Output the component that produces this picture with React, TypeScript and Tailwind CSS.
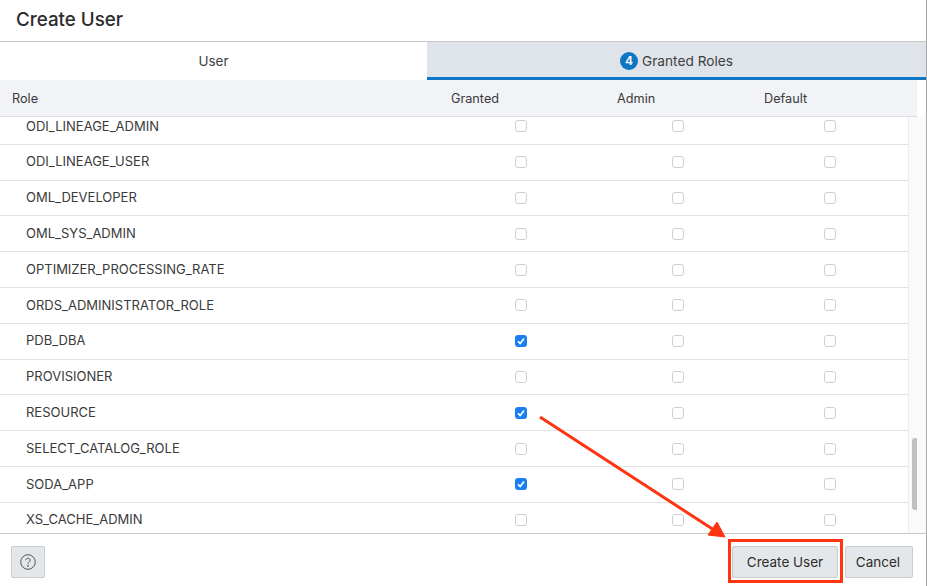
const font = "font-['Inter','Liberation_Sans',sans-serif]";

const roles: { name: string; granted?: boolean }[] = [
  { name: "ODI_LINEAGE_ADMIN" },
  { name: "ODI_LINEAGE_USER" },
  { name: "OML_DEVELOPER" },
  { name: "OML_SYS_ADMIN" },
  { name: "OPTIMIZER_PROCESSING_RATE" },
  { name: "ORDS_ADMINISTRATOR_ROLE" },
  { name: "PDB_DBA", granted: true },
  { name: "PROVISIONER" },
  { name: "RESOURCE", granted: true },
  { name: "SELECT_CATALOG_ROLE" },
  { name: "SODA_APP", granted: true },
  { name: "XS_CACHE_ADMIN" },
];

function Checkbox({ checked }: { checked?: boolean }) {
  if (checked) {
    return (
      <span className="flex h-3 w-3 items-center justify-center rounded-[3px] bg-[#1a7ff5]">
        <svg viewBox="0 0 12 12" className="h-3 w-3" fill="none">
          <path d="M3 6.3 L5.2 8.5 L9 3.6" stroke="white" strokeWidth="1.7" />
        </svg>
      </span>
    );
  }
  return <span className="block h-3 w-3 rounded-[3px] border border-[#cfcfcf] bg-white" />;
}

function RoleRow({ name, granted }: { name: string; granted?: boolean }) {
  return (
    <div className="grid h-[35.8px] grid-cols-[515px_157px_152px_84px] items-center border-b border-[#e2e2e2] text-[13px] text-[#3a3a3a]">
      <div className="pl-[26px]">{name}</div>
      <Checkbox checked={granted} />
      <Checkbox />
      <Checkbox />
    </div>
  );
}

export default function App() {
  return (
    <div className={`relative flex h-[586px] w-[927px] flex-col overflow-hidden border-r border-[#a8a8a8] bg-white ${font}`}>
      <div className="flex h-[41px] items-center pb-[1px] pl-4 text-[18.8px] font-medium text-[#2c2c2c]">Create User</div>

      <div className="flex h-[39px] border-t border-[#c9c9c9] text-[13.5px] text-[#3f3f3f]">
        <div className="flex w-[427px] items-center justify-center">User</div>
        <div className="flex flex-1 items-center justify-center gap-[4px] border-b-[3px] border-[#0f76c6] bg-[#dfe3ea] pt-[3px]">
          <span className="flex h-[18px] w-[18px] items-center justify-center rounded-full bg-[#0f76c6] text-[12px] font-semibold text-white">4</span>
          <span className="text-[13.7px]">Granted Roles</span>
        </div>
      </div>

      <div className="flex h-[37px] w-[917px] items-center border-b border-[#d8dce3] bg-[#f1f3f6] pl-3 pt-[2px] text-[12.7px] text-[#3a3a3a]">
        <span className="w-[439px]">Role</span>
        <span className="w-[166px]">Granted</span>
        <span className="w-[147px]">Admin</span>
        <span>Default</span>
      </div>

      <div className="flex min-h-0 flex-1">
        <div className="w-[908px] overflow-hidden">
          <div className="mt-[-8px]">
            {roles.map((r) => (
              <RoleRow key={r.name} name={r.name} granted={r.granted} />
            ))}
          </div>
        </div>
        <div className="flex-1 border-l border-[#efefef] bg-[#fafafa] pl-[3px] pt-[321px]">
          <div className="h-[72px] w-[5px] rounded-l-[3px] bg-[#c1c1c1]" />
        </div>
      </div>

      <div className="flex h-[53px] items-center justify-between border-t border-[#c9c9c9] pl-[11px] pr-[13px] pt-[4px] text-[13.5px] text-[#2c2c2c]">
        <button className="flex h-[32px] w-[34px] items-center justify-center rounded-[2px] border border-[#c9ccd0] bg-[#e4e7ea] text-[#444]">
          <svg viewBox="0 0 16 16" className="h-4 w-4" fill="none" stroke="currentColor" strokeWidth="0.9">
            <circle cx="8" cy="8" r="7.3" />
            <path d="M5.8 6.2 C5.8 3.6 10.2 3.6 10.2 6.2 C10.2 7.9 8 7.8 8 9.8" />
            <circle cx="8" cy="11.9" r="0.45" fill="currentColor" />
          </svg>
        </button>
        <div className="flex gap-[7px]">
          <button className="h-[32px] w-[106px] rounded-[2px] border border-[#c9ccd0] bg-[#e4e7ea] pt-[1px]">Create User</button>
          <button className="h-[32px] w-[68px] rounded-[2px] border border-[#c9ccd0] bg-[#e4e7ea] pt-[1px] pr-[2px]">Cancel</button>
        </div>
      </div>

      {/* annotation drawn over the screenshot */}
      <div className="absolute left-[728px] top-[539px] h-[44px] w-[115px] border-[3px] border-[#ff3410]" />
      <svg className="absolute left-0 top-0 h-[586px] w-[927px]" viewBox="0 0 927 586" fill="none">
        <path d="M540 417 L714 530" stroke="#ff3410" strokeWidth="3" />
        <path d="M725 537 L708 535 L717 522 Z" fill="#ff3410" stroke="#ff3410" />
      </svg>
    </div>
  );
}
